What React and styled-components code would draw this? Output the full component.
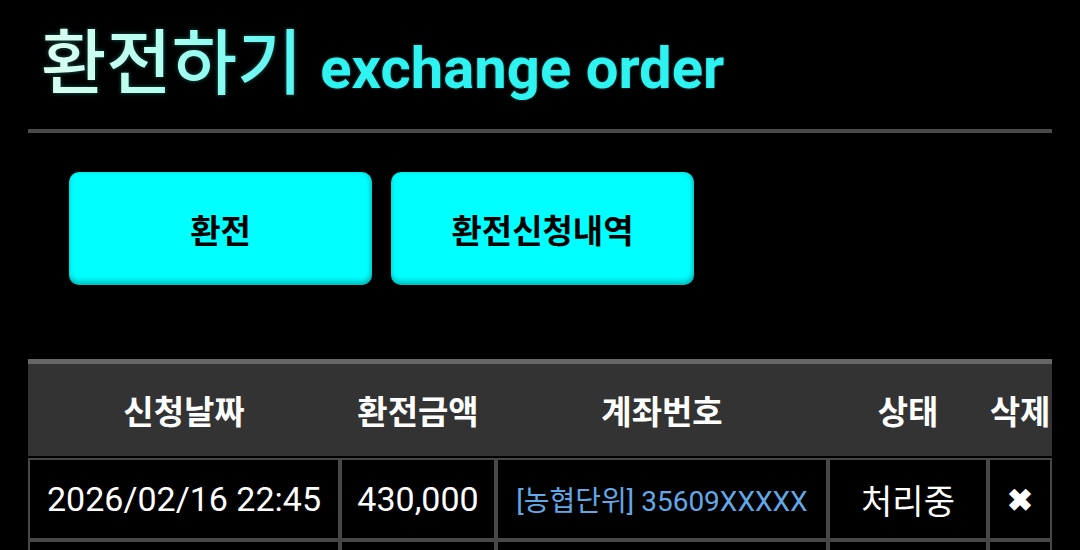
import React from "react";
import styled, { createGlobalStyle } from "styled-components";

const Global = createGlobalStyle`
  html, body { margin: 0; padding: 0; background: #000; }
  body { font-family: Roboto, "Noto Sans CJK KR", sans-serif; color: #fff; }
`;

const Page = styled.div`
  background: #000;
  padding: 0 28px;
  height: 550px;
  overflow: hidden;
`;

const Title = styled.h1`
  margin: 0;
  padding: 11px 0 0 13px;
  height: 115px;
  box-sizing: border-box;
  display: flex;
  align-items: baseline;
  gap: 18px;
`;

const TitleKo = styled.span`
  font-family: "Noto Sans CJK KR", sans-serif;
  font-size: 71px;
  font-weight: 500;
  line-height: 1.3;
  background: linear-gradient(90deg, #dcfff0 0%, #b4fff0 45%, #50f6f4 100%);
  -webkit-background-clip: text;
  background-clip: text;
  color: transparent;
  filter: drop-shadow(0 0 2px rgba(80, 255, 240, 0.35));
`;

const TitleEn = styled.span`
  font-family: Roboto, sans-serif;
  font-size: 58px;
  font-weight: 700;
  color: #2ef3f1;
  text-shadow: 0 0 3px rgba(40, 240, 240, 0.35);
`;

const Divider = styled.div`
  height: 4px;
  background: #4a4a4a;
  margin-top: 14px;
`;

const ButtonRow = styled.div`
  display: flex;
  gap: 19px;
  padding: 39px 0 0 41px;
`;

const TabButton = styled.button`
  width: 303px;
  height: 113px;
  border: none;
  border-radius: 10px;
  background: #00ffff;
  box-shadow: inset 0 -4px 5px rgba(0, 90, 90, 0.35), inset -2px 0 4px rgba(0, 90, 90, 0.2);
  font-family: "Noto Sans CJK KR", sans-serif;
  font-size: 33px;
  font-weight: 700;
  color: #000;
  cursor: pointer;
  padding: 0;
`;

const Table = styled.table`
  margin-top: 74px;
  width: 1024px;
  table-layout: fixed;
  border-collapse: separate;
  border-spacing: 0;
`;

const Th = styled.th`
  background: #333;
  border-top: 5px solid #666;
  border-bottom: 2px solid #000;
  height: 92px;
  padding: 0;
  font-family: "Noto Sans CJK KR", sans-serif;
  font-size: 33px;
  font-weight: 700;
  color: #fff;
  text-align: center;
  white-space: nowrap;
`;

const Td = styled.td`
  border: 2px solid #474747;
  height: 78px;
  padding: 0;
  text-align: center;
  font-family: Roboto, "Noto Sans CJK KR", sans-serif;
  font-size: ${(p) => (p.$small ? "28px" : "34px")};
  color: ${(p) => (p.$link ? "#62a8e8" : "#fff")};
  white-space: nowrap;
`;

const DeleteMark = styled.span`
  font-size: 31px;
  font-weight: 700;
  color: #fff;
`;

const rows = [
  { date: "2026/02/16 22:45", amount: "430,000", account: "[농협단위] 35609XXXXX", status: "처리중" },
];

export default function App() {
  return (
    <Page>
      <Global />
      <Title>
        <TitleKo>환전하기</TitleKo>
        <TitleEn>exchange order</TitleEn>
      </Title>
      <Divider />
      <ButtonRow>
        <TabButton>환전</TabButton>
        <TabButton>환전신청내역</TabButton>
      </ButtonRow>
      <Table>
        <colgroup>
          <col style={{ width: 312 }} />
          <col style={{ width: 156 }} />
          <col style={{ width: 332 }} />
          <col style={{ width: 160 }} />
          <col style={{ width: 64 }} />
        </colgroup>
        <thead>
          <tr>
            <Th>신청날짜</Th>
            <Th>환전금액</Th>
            <Th>계좌번호</Th>
            <Th>상태</Th>
            <Th>삭제</Th>
          </tr>
        </thead>
        <tbody>
          {rows.map((r, i) => (
            <tr key={i}>
              <Td>{r.date}</Td>
              <Td>{r.amount}</Td>
              <Td $small $link>{r.account}</Td>
              <Td>{r.status}</Td>
              <Td><DeleteMark>✖</DeleteMark></Td>
            </tr>
          ))}
          <tr>
            <Td />
            <Td />
            <Td />
            <Td />
            <Td />
          </tr>
        </tbody>
      </Table>
    </Page>
  );
}
